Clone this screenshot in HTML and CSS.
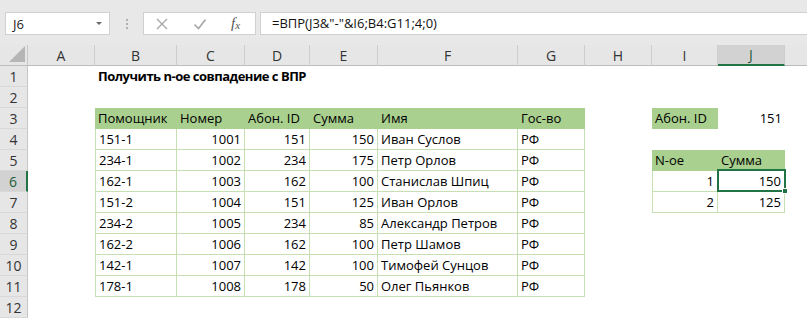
FILE: index.html
```html
<!DOCTYPE html>
<html lang="ru">
<head>
<meta charset="utf-8">
<title>ВПР</title>
<link rel="stylesheet" href="styles.css">
</head>
<body>
<div class="app">
  <div class="toolbar">
    <div class="namebox"><span class="nb-text">J6</span><span class="nb-arrow"></span></div>
    <div class="grip"><i></i><i></i><i></i></div>
    <div class="fbtns">
      <svg class="ico" width="14" height="14" viewBox="0 0 14 14"><path d="M2 2 L12 12 M12 2 L2 12" stroke="#a6a6a6" stroke-width="1.3" fill="none"/></svg>
      <svg class="ico" width="14" height="14" viewBox="0 0 14 14"><path d="M1.5 7.5 L5.5 11.5 L12.5 2.5" stroke="#a6a6a6" stroke-width="1.6" fill="none"/></svg>
      <span class="fx">f<sub>x</sub></span>
    </div>
    <div class="formula">=ВПР(J3&amp;"-"&amp;I6;B4:G11;4;0)</div>
  </div>
  <div class="sheet">
    <div class="corner"><svg width="16" height="16" viewBox="0 0 16 16"><polygon points="16,0 16,16 0,16" fill="#b5b5b5"/></svg></div>
    <div class="hd">A</div><div class="hd">B</div><div class="hd">C</div><div class="hd">D</div><div class="hd">E</div><div class="hd">F</div><div class="hd">G</div><div class="hd">H</div><div class="hd">I</div><div class="hd hd-sel">J</div><div class="hd hd-rest"></div>

    <div class="rh">1</div><div class="c"></div><div class="c title">Получить n-ое совпадение с ВПР</div><div class="c"></div><div class="c"></div><div class="c"></div><div class="c"></div><div class="c"></div><div class="c"></div><div class="c"></div><div class="c"></div><div class="c"></div>

    <div class="rh">2</div><div class="c"></div><div class="c"></div><div class="c"></div><div class="c"></div><div class="c"></div><div class="c"></div><div class="c"></div><div class="c"></div><div class="c"></div><div class="c"></div><div class="c"></div>

    <div class="rh">3</div><div class="c"></div><div class="c g">Помощник</div><div class="c g">Номер</div><div class="c g">Абон. ID</div><div class="c g">Сумма</div><div class="c g">Имя</div><div class="c g">Гос-во</div><div class="c"></div><div class="c g">Абон. ID</div><div class="c r">151</div><div class="c"></div>

    <div class="rh">4</div><div class="c"></div><div class="c b bl">151-1</div><div class="c b r">1001</div><div class="c b r">151</div><div class="c b r">150</div><div class="c b">Иван Суслов</div><div class="c b">РФ</div><div class="c"></div><div class="c"></div><div class="c"></div><div class="c"></div>

    <div class="rh">5</div><div class="c"></div><div class="c b bl">234-1</div><div class="c b r">1002</div><div class="c b r">234</div><div class="c b r">175</div><div class="c b">Петр Орлов</div><div class="c b">РФ</div><div class="c"></div><div class="c g">N-ое</div><div class="c g">Сумма</div><div class="c"></div>

    <div class="rh rh-sel">6</div><div class="c"></div><div class="c b bl">162-1</div><div class="c b r">1003</div><div class="c b r">162</div><div class="c b r">100</div><div class="c b">Станислав Шпиц</div><div class="c b">РФ</div><div class="c"></div><div class="c b bl r">1</div><div class="c b r active">150<span class="sel"><span class="handle"></span></span></div><div class="c"></div>

    <div class="rh">7</div><div class="c"></div><div class="c b bl">151-2</div><div class="c b r">1004</div><div class="c b r">151</div><div class="c b r">125</div><div class="c b">Иван Орлов</div><div class="c b">РФ</div><div class="c"></div><div class="c b bl r">2</div><div class="c b r">125</div><div class="c"></div>

    <div class="rh">8</div><div class="c"></div><div class="c b bl">234-2</div><div class="c b r">1005</div><div class="c b r">234</div><div class="c b r">85</div><div class="c b">Александр Петров</div><div class="c b">РФ</div><div class="c"></div><div class="c"></div><div class="c"></div><div class="c"></div>

    <div class="rh">9</div><div class="c"></div><div class="c b bl">162-2</div><div class="c b r">1006</div><div class="c b r">162</div><div class="c b r">100</div><div class="c b">Петр Шамов</div><div class="c b">РФ</div><div class="c"></div><div class="c"></div><div class="c"></div><div class="c"></div>

    <div class="rh">10</div><div class="c"></div><div class="c b bl">142-1</div><div class="c b r">1007</div><div class="c b r">142</div><div class="c b r">100</div><div class="c b">Тимофей Сунцов</div><div class="c b">РФ</div><div class="c"></div><div class="c"></div><div class="c"></div><div class="c"></div>

    <div class="rh">11</div><div class="c"></div><div class="c b bl">178-1</div><div class="c b r">1008</div><div class="c b r">178</div><div class="c b r">50</div><div class="c b">Олег Пьянков</div><div class="c b">РФ</div><div class="c"></div><div class="c"></div><div class="c"></div><div class="c"></div>

    <div class="rh">12</div><div class="c"></div><div class="c"></div><div class="c"></div><div class="c"></div><div class="c"></div><div class="c"></div><div class="c"></div><div class="c"></div><div class="c"></div><div class="c"></div><div class="c"></div>
  </div>
</div>
</body>
</html>
```
FILE: styles.css
```css
* { box-sizing: border-box; }
html, body { margin: 0; padding: 0; background: #ffffff; }
body { font-family: "Open Sans", "Noto Sans", sans-serif; color: #000; overflow: hidden; }
.app { width: 807px; height: 319px; overflow: hidden; }

.toolbar {
  height: 45px;
  background: #e8e8e8;
  display: flex;
  align-items: flex-start;
  padding: 12px 0 0 5px;
}
.namebox {
  width: 105px; height: 23px;
  background: #fff;
  border: 1px solid #d0d0d0;
  display: flex; align-items: center; justify-content: space-between;
  padding: 0 7px 0 7px;
  font-size: 13px; color: #222;
}
.nb-arrow {
  width: 0; height: 0;
  border-left: 3px solid transparent;
  border-right: 3px solid transparent;
  border-top: 3px solid #6a6a6a;
}
.grip {
  width: 33px; height: 23px;
  display: flex; flex-direction: column; align-items: center; justify-content: center; gap: 2px;
}
.grip i { display: block; width: 2px; height: 2px; background: #b0b0b0; }
.fbtns {
  width: 113px; height: 23px;
  background: #fff;
  border: 1px solid #d0d0d0;
  display: flex; align-items: center;
  padding: 0 0 0 11px;
  gap: 24px;
}
.fx { font-family: "Liberation Serif", serif; font-style: italic; font-size: 15px; color: #555; line-height: 1; }
.fx sub { font-size: 11px; vertical-align: -1px; }
.formula {
  flex: 1; height: 23px; margin-left: 4px;
  background: #fff;
  border: 1px solid #d0d0d0; border-right: none;
  font-size: 13px; line-height: 21px; color: #111;
  padding-left: 11px;
}

.sheet {
  display: grid;
  grid-template-columns: 28px 67px 82px 68px 65px 68px 140px 67px 67px 66px 67px 1fr;
  grid-auto-rows: 21px;
  font-size: 13px;
  line-height: 21px;
}
.corner { background: #e6e6e6; border-right: 1px solid #c6c6c6; border-bottom: 1px solid #bcbcbc; display: flex; align-items: flex-end; justify-content: flex-end; padding: 0 2px 3px 0; }
.corner svg { display: block; }
.hd {
  background: #e6e6e6;
  border-right: 1px solid #cdcdcd;
  border-bottom: 1px solid #bcbcbc;
  text-align: center; color: #333;
  font-size: 14px;
}
.hd-rest { border-right: none; }
.hd-sel { background: #d2d2d2; border-bottom: 2px solid #217346; color: #1f5c3a; line-height: 20px; }
.rh {
  background: #e6e6e6;
  border-right: 1px solid #c6c6c6;
  border-bottom: 1px solid #d8d8d8;
  text-align: center; color: #333;
  font-size: 14px;
}
.rh-sel { background: #d2d2d2; border-right: 2px solid #217346; color: #1f5c3a; }

.c { white-space: nowrap; padding: 0 3px; position: relative; }
.title { font-weight: bold; letter-spacing: -0.5px; overflow: visible; z-index: 1; }
.g { background: #a9d08e; }
.b { border-right: 1px solid #c6e0b4; border-bottom: 1px solid #c6e0b4; }
.bl { border-left: 1px solid #c6e0b4; }
.r { text-align: right; }
.sel {
  position: absolute; left: -1px; top: -2px; right: -2px; bottom: -1px;
  border: 2px solid #217346;
  z-index: 2;
}
.handle {
  position: absolute; right: -4px; bottom: -4px;
  width: 6px; height: 6px;
  background: #217346; border: 1px solid #fff;
}
```
